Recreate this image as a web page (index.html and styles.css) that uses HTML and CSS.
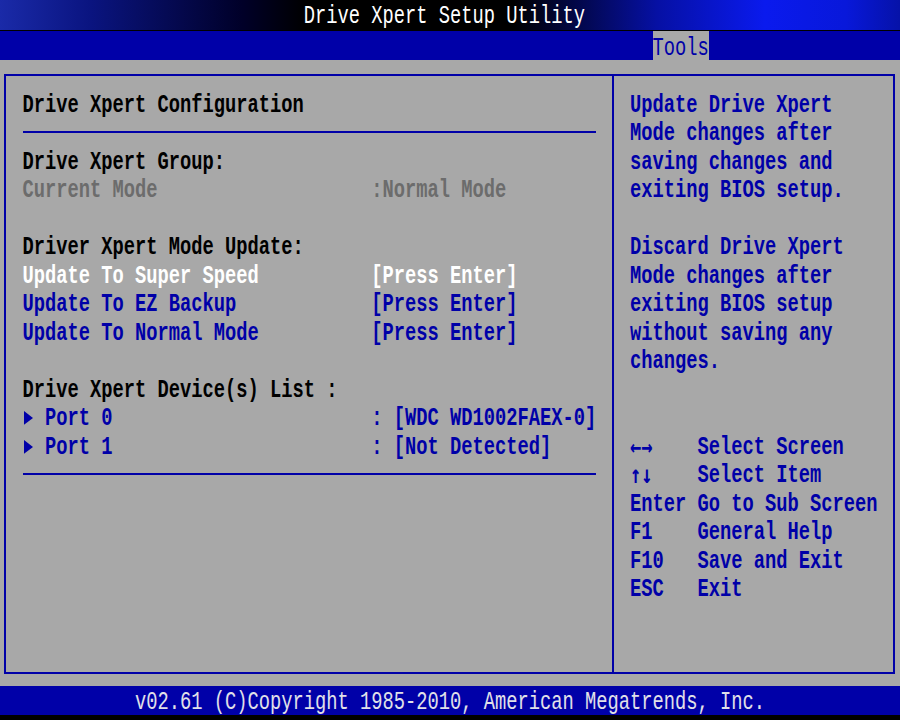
FILE: index.html
```html
<!doctype html>
<html>

<head>
  <meta charset="UTF-8" />
  <meta name="viewport" content="width=device-width, initial-scale=1.0" />
  <title>Drive Xpert Setup Utility</title>
  <link rel="stylesheet" href="styles.css">
</head>

<body>
  <div class="screen">
    <header class="title">
      <div class="row">Drive Xpert Setup Utility</div>
    </header>

    <nav class="menu">
      <div class="tab"><div class="row">Tools</div></div>
    </nav>

    <main class="main">
      <div class="frame">
        <section class="pane setup">
          <div class="row">Drive Xpert Configuration</div>
          <div class="rule"></div>
          <div class="row">Drive Xpert Group:</div>
          <div class="row field dim"><span>Current Mode</span><span>:Normal Mode</span></div>
          <div class="row"></div>
          <div class="row">Driver Xpert Mode Update:</div>
          <div class="row field sel"><span>Update To Super Speed</span><span>[Press Enter]</span></div>
          <div class="row field item"><span>Update To EZ Backup</span><span>[Press Enter]</span></div>
          <div class="row field item"><span>Update To Normal Mode</span><span>[Press Enter]</span></div>
          <div class="row"></div>
          <div class="row">Drive Xpert Device(s) List :</div>
          <div class="row field item"><span><i class="tri"></i>Port 0</span><span>: [WDC WD1002FAEX-0]</span></div>
          <div class="row field item"><span><i class="tri"></i>Port 1</span><span>: [Not Detected]</span></div>
          <div class="rule"></div>
        </section>

        <aside class="pane help">
          <div class="row">Update Drive Xpert</div>
          <div class="row">Mode changes after</div>
          <div class="row">saving changes and</div>
          <div class="row">exiting BIOS setup.</div>
          <div class="row"></div>
          <div class="row">Discard Drive Xpert</div>
          <div class="row">Mode changes after</div>
          <div class="row">exiting BIOS setup</div>
          <div class="row">without saving any</div>
          <div class="row">changes.</div>
          <div class="row"></div>
          <div class="row"></div>
          <div class="row keys"><span class="arrows">←→</span><span>Select Screen</span></div>
          <div class="row keys"><span class="arrows">↑↓</span><span>Select Item</span></div>
          <div class="row keys"><span>Enter</span><span>Go to Sub Screen</span></div>
          <div class="row keys"><span>F1</span><span>General Help</span></div>
          <div class="row keys"><span>F10</span><span>Save and Exit</span></div>
          <div class="row keys"><span>ESC</span><span>Exit</span></div>
        </aside>
      </div>
    </main>

    <footer class="foot">
      <div class="row">v02.61 (C)Copyright 1985-2010, American Megatrends, Inc.</div>
    </footer>
  </div>
</body>

</html>
```

FILE: styles.css
```css
* {
  box-sizing: border-box;
  margin: 0;
  padding: 0;
}

body {
  width: 900px;
  height: 720px;
  overflow: hidden;
  background-color: black;
  font-family: "Liberation Mono", "DejaVu Sans Mono", monospace;
  font-size: 18.75px;
  font-weight: bold;
  color: black;
}

.screen {
  width: 900px;
  height: 720px;
  display: flex;
  flex-direction: column;
  background-color: #a8a8a8;
}

/* one text-mode line: 80 columns of 1ch, glyphs stretched tall */
.row {
  height: 28.5px;
  line-height: 28.5px;
  white-space: pre;
  transform: translateY(2px) scaleY(1.36);
}

.title {
  height: 31px;
  border-bottom: 1px solid black;
  padding-left: 27ch;
  color: white;
  font-weight: normal;
  background: linear-gradient(90deg, #1a2aa8 0%, #0a1480 10%, #000028 27%, #000000 34%, #000000 57%, #0610a4 73%, #0a1aee 85%, #0818da 94%, #0612a8 100%);
}

.title .row {
  height: 30px;
  line-height: 30px;
  transform: translateY(1px) scaleY(1.36);
}

.menu {
  height: 29px;
  padding-left: 58ch;
  background-color: #0000a8;
}

.tab {
  width: 5ch;
  height: 29px;
  color: #0000a8;
  font-weight: normal;
  background-color: #a8a8a8;
}

.tab .row {
  height: 29px;
  line-height: 29px;
  transform: translateY(3px) scaleY(1.4);
}

.main {
  flex: auto;
  padding: 13.5px 5px 12.5px 4px;
}

.frame {
  height: 100%;
  display: flex;
  border: 2px solid #0000a8;
}

.pane {
  padding-top: 13.25px;
}

.setup {
  width: 608px;
  padding-left: 16.5px;
  border-right: 2px solid #0000a8;
}

.help {
  flex: auto;
  padding-left: 16px;
  color: #0000a8;
}

.rule {
  height: 28.5px;
  display: flex;
  align-items: center;
}

.rule::before {
  content: "";
  width: 573.75px;
  height: 2px;
  background-color: #0000a8;
}

.field {
  display: grid;
  grid-template-columns: 31ch auto;
}

.dim {
  color: #6c6c6c;
}

.sel {
  color: white;
}

.item {
  color: #0000a8;
}

.tri {
  display: inline-block;
  width: 2ch;
  vertical-align: middle;
}

.tri::before {
  content: "";
  display: block;
  width: 0;
  height: 0;
  margin-left: 1px;
  border-top: 5px solid transparent;
  border-bottom: 5px solid transparent;
  border-left: 9px solid #0000a8;
}

.keys {
  display: grid;
  grid-template-columns: 6ch auto;
}

.arrows {
  font-family: "DejaVu Sans Mono", monospace;
  font-size: 18.6px;
}

.foot {
  height: 34px;
  padding-left: 12ch;
  border-bottom: 5px solid black;
  color: #e0e0e8;
  font-weight: normal;
  background-color: #0000a8;
}

.foot .row {
  height: 29px;
  line-height: 29px;
}
```
